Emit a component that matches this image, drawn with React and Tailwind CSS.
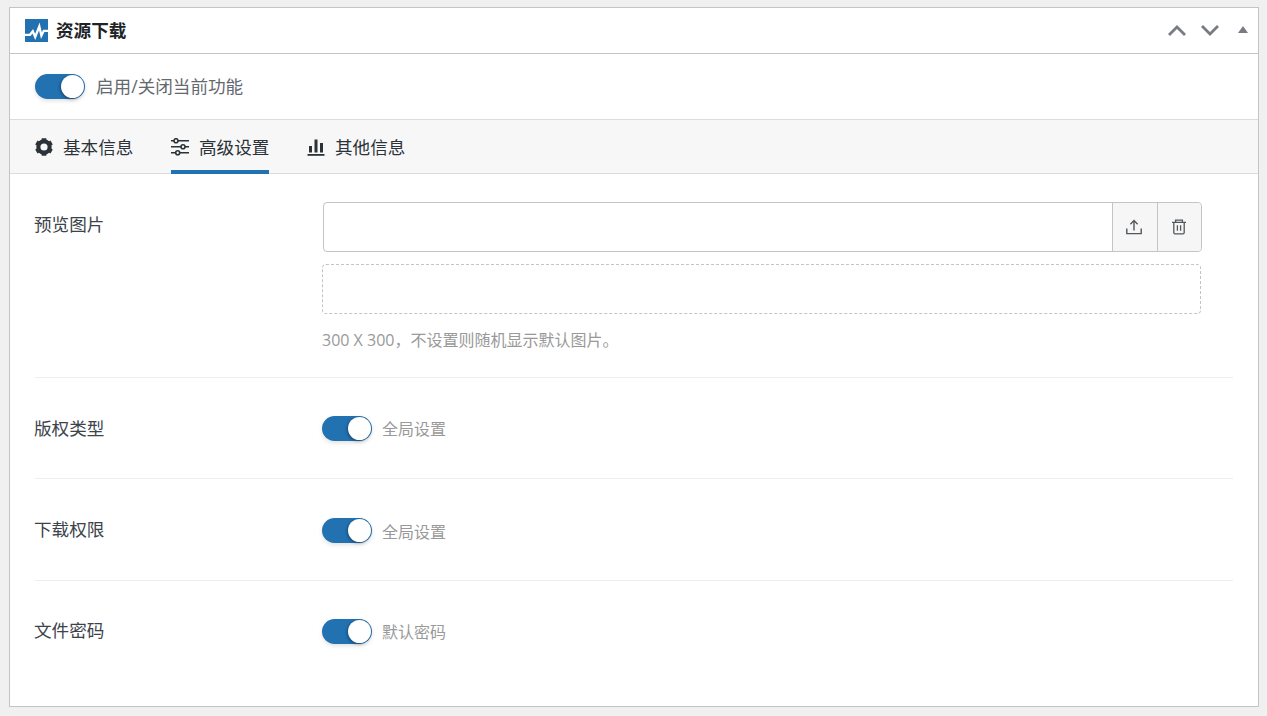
import React from "react";

function Toggle() {
  return (
    <span className="flex h-[25px] w-[50px] shrink-0 items-center justify-end rounded-full bg-[#2271b1] p-px shadow-[0_2px_4px_rgba(0,0,0,0.12)]">
      <span className="block h-[23px] w-[23px] rounded-full bg-white shadow-[-1px_1px_3px_rgba(0,0,0,0.35)]" />
    </span>
  );
}

function Gear() {
  return (
    <svg width="18" height="18" viewBox="1.5 1.5 21 21" fill="none" className="shrink-0">
      <circle cx="12" cy="12" r="6.6" stroke="#2c3338" strokeWidth="4.8" />
      <path
        d="M12 5.5V1.8M12 18.5V22.2M17.6 8.75L20.9 6.85M6.4 15.25L3.1 17.15M6.4 8.75L3.1 6.85M17.6 15.25L20.9 17.15"
        stroke="#2c3338"
        strokeWidth="5.4"
      />
    </svg>
  );
}

function Sliders() {
  return (
    <svg width="18" height="18" viewBox="0 0 18 18" fill="none" stroke="#2c3338" strokeWidth="1.6" className="shrink-0">
      <path d="M0 2.7H3M7 2.7H18M0 8.7H10M14 8.7H18M0 14.7H4.7M8.7 14.7H18" />
      <circle cx="5" cy="2.7" r="2" />
      <circle cx="12" cy="8.7" r="2" />
      <circle cx="6.7" cy="14.7" r="2" />
    </svg>
  );
}

function Bars() {
  return (
    <svg width="18" height="18" viewBox="0 0 18 18" fill="#2c3338" className="shrink-0">
      <rect x="2" y="8" width="3" height="6.5" />
      <rect x="7.5" y="1.5" width="3" height="13" />
      <rect x="13" y="5" width="3" height="9.5" />
      <rect x="0.5" y="16" width="17" height="1.8" />
    </svg>
  );
}

function Logo() {
  return (
    <svg width="23" height="23" viewBox="0 0 23 23" className="shrink-0">
      <rect width="23" height="23" fill="#2271b1" />
      <path d="M0 15.8H5L7.8 12.2L10.2 18L14.3 7.5L16.4 16.6L18.8 11.8H23" fill="none" stroke="#fff" strokeWidth="2.3" />
    </svg>
  );
}

function Upload() {
  return (
    <svg width="16" height="16" viewBox="0 0 16 16" fill="none" stroke="#50575e" strokeWidth="1.4">
      <path d="M8 11.5V1.8M4.4 5.2L8 1.6L11.6 5.2" />
      <path d="M0.8 9.5V14.6H15.2V9.5" />
    </svg>
  );
}

function Trash() {
  return (
    <svg width="16" height="16" viewBox="0 0 16 16" fill="none" stroke="#50575e" strokeWidth="1.3">
      <path d="M1 3.4H15M4.6 3.4V1.2H11.4V3.4M2.8 3.4V13.6Q2.8 14.8 4 14.8H12Q13.2 14.8 13.2 13.6V3.4" />
      <path d="M6.4 6.2V11.8M9.6 6.2V11.8" />
    </svg>
  );
}

function Tab({ icon, label, active }) {
  return (
    <div className={active ? "flex h-[54px] items-center gap-[10px] border-b-4 border-[#2271b1] pt-1" : "flex h-[54px] items-center gap-[10px] border-b-4 border-transparent pt-1"}>
      {icon}
      <span className="pt-[2px] text-[17.6px] leading-none text-[#2c3338]">{label}</span>
    </div>
  );
}

function Control({ value }) {
  return (
    <div className="flex items-center gap-[10px]">
      <Toggle />
      <span className="pt-[2px] text-[16px] leading-none text-[#999999]">{value}</span>
    </div>
  );
}

export default function App() {
  return (
    <div className="h-[716px] overflow-hidden bg-[#f0f0f1] pl-[9px] pr-[8px] pt-[7px] font-['Open_Sans','Noto_Sans_CJK_SC',sans-serif]">
      <div className="flex h-[700px] flex-col border border-[#c3c4c7] bg-white">
        <div className="flex h-[46px] shrink-0 items-center justify-between border-b border-[#c3c4c7] pl-[15px] pr-[10px]">
          <div className="flex items-center gap-2">
            <Logo />
            <span className="text-[17.6px] font-bold leading-none text-[#1d2327]">资源下载</span>
          </div>
          <div className="flex items-center">
            <svg width="18" height="11" viewBox="0 0 18 11" fill="none" stroke="#787c82" strokeWidth="2.8"><path d="M1 10L9 2L17 10" /></svg>
            <svg width="18" height="11" viewBox="0 0 18 11" fill="none" stroke="#787c82" strokeWidth="2.8" className="ml-[15px]"><path d="M1 1L9 9L17 1" /></svg>
            <svg width="10" height="7" viewBox="0 0 10 7" fill="#787c82" className="mb-[2px] ml-[19px]"><path d="M5 0L10 7H0Z" /></svg>
          </div>
        </div>

        <div className="flex h-[66px] shrink-0 items-center gap-[11px] border-b border-[#dcdcde] pl-[25px]">
          <Toggle />
          <span className="text-[17.6px] leading-none text-[#646970]">启用/关闭当前功能</span>
        </div>

        <div className="flex h-[54px] shrink-0 items-center gap-[37.6px] border-b border-[#dcdcde] bg-[#f7f7f7] pl-[25px]">
          <Tab icon={<Gear />} label="基本信息" />
          <Tab icon={<Sliders />} label="高级设置" active />
          <Tab icon={<Bars />} label="其他信息" />
        </div>

        <div className="flex flex-col px-[25px]">
          <div className="flex h-[204px] border-b border-[#eeeeee] pt-[28px]">
            <div className="-ml-px w-[288px] shrink-0 pt-[14px] text-[17.6px] leading-none text-[#3c434a]">预览图片</div>
            <div className="flex w-[880px] flex-col">
              <div className="ml-px flex h-[50px] w-[879px] rounded border border-[#c3c4c7]">
                <div className="flex-1" />
                <div className="flex w-[45px] items-center justify-center border-l border-[#c3c4c7] bg-[#f6f6f6] pr-[2px]"><Upload /></div>
                <div className="flex w-[44px] items-center justify-center rounded-r border-l border-[#c3c4c7] bg-[#f6f6f6] pr-[2px]"><Trash /></div>
              </div>
              <div className="mt-3 h-[50px] w-[879px] rounded border border-dashed border-[#c3c4c7]" />
              <div className="mt-[17px] text-[16px] leading-[18px] text-[#999999]">300 X 300，不设置则随机显示默认图片。</div>
            </div>
          </div>
          <div className="flex h-[101px] items-center border-b border-[#eeeeee]">
            <div className="-ml-px w-[288px] shrink-0 pt-[2px] text-[17.6px] leading-none text-[#3c434a]">版权类型</div>
            <Control value="全局设置" />
          </div>
          <div className="flex h-[102px] items-center border-b border-[#eeeeee] pt-[2px]">
            <div className="-ml-px w-[288px] shrink-0 pb-[2px] text-[17.6px] leading-none text-[#3c434a]">下载权限</div>
            <Control value="全局设置" />
          </div>
          <div className="flex h-[102px] items-center pb-[2px]">
            <div className="-ml-px w-[288px] shrink-0 text-[17.6px] leading-none text-[#3c434a]">文件密码</div>
            <Control value="默认密码" />
          </div>
        </div>
      </div>
    </div>
  );
}
